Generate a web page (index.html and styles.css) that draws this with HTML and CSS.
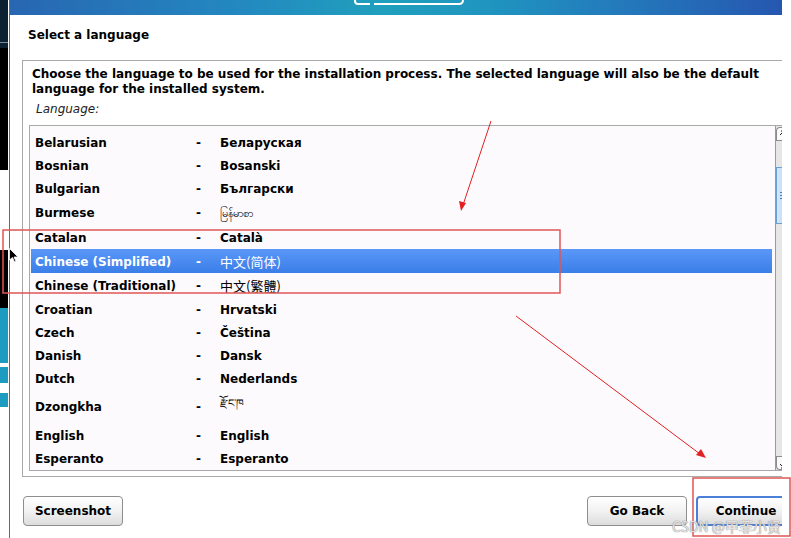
FILE: index.html
```html
<!DOCTYPE html>
<html lang="en">
<head>
    <meta charset="UTF-8">
    <meta name="viewport" content="width=device-width, initial-scale=1.0">
    <title>Select a language</title>
    <link rel="stylesheet" href="styles.css">
</head>
<body>
    <div class="screen">
        <div class="desktop-edge">
            <div class="blk navy"></div>
            <div class="blk black-1"></div>
            <div class="blk white-1"></div>
            <div class="blk black-2"></div>
            <div class="blk teal-1"></div>
            <div class="blk gap-1"></div>
            <div class="blk teal-2"></div>
            <div class="blk gap-2"></div>
            <div class="blk teal-3"></div>
        </div>

        <div class="installer">
            <div class="banner">
                <svg class="banner-logo" width="120" height="15" viewBox="0 0 120 15">
                    <path d="M2 0 V1 Q2 4 5 4 H17" fill="none" stroke="#fff" stroke-width="2"/>
                    <path d="M21 4 H106 Q110 4 110 0" fill="none" stroke="#fff" stroke-width="2"/>
                </svg>
            </div>

            <div class="content">
                <h1 class="title">Select a language</h1>

                <div class="panel">
                    <p class="intro">Choose the language to be used for the installation process. The selected language will also be the default language for the installed system.</p>
                    <div class="field-label">Language:</div>

                    <div class="listbox">
                        <ul class="lang-list">
                            <li class="row"><span>Belarusian</span><span>-</span><span>Беларуская</span></li>
                            <li class="row"><span>Bosnian</span><span>-</span><span>Bosanski</span></li>
                            <li class="row"><span>Bulgarian</span><span>-</span><span>Български</span></li>
                            <li class="row row-25"><span>Burmese</span><span>-</span><span class="script">မြန်မာစာ</span></li>
                            <li class="row row-24"><span>Catalan</span><span>-</span><span>Català</span></li>
                            <li class="row row-24 selected"><span>Chinese (Simplified)</span><span>-</span><span class="cjk">中文(简体)</span></li>
                            <li class="row row-25"><span>Chinese (Traditional)</span><span>-</span><span class="cjk">中文(繁體)</span></li>
                            <li class="row"><span>Croatian</span><span>-</span><span>Hrvatski</span></li>
                            <li class="row"><span>Czech</span><span>-</span><span>Čeština</span></li>
                            <li class="row"><span>Danish</span><span>-</span><span>Dansk</span></li>
                            <li class="row"><span>Dutch</span><span>-</span><span>Nederlands</span></li>
                            <li class="row row-33"><span>Dzongkha</span><span>-</span><span class="script">རྫོང་ཁ</span></li>
                            <li class="row row-24"><span>English</span><span>-</span><span>English</span></li>
                            <li class="row"><span>Esperanto</span><span>-</span><span>Esperanto</span></li>
                        </ul>

                        <div class="scrollbar">
                            <div class="sb-btn sb-up">
                                <svg width="6" height="6" viewBox="0 0 6 6"><path d="M1 5 L5 1 M2 1 H5 V4" fill="none" stroke="#222" stroke-width="1"/></svg>
                            </div>
                            <div class="sb-thumb"><span></span><span></span><span></span></div>
                            <div class="sb-fill"></div>
                            <div class="sb-btn sb-down">
                                <svg width="6" height="6" viewBox="0 0 6 6"><path d="M1 1 L5 5 M5 2 V5 H2" fill="none" stroke="#222" stroke-width="1"/></svg>
                            </div>
                        </div>
                    </div>
                </div>

                <div class="actions">
                    <button class="btn">Screenshot</button>
                    <div class="spacer"></div>
                    <button class="btn">Go Back</button>
                    <button class="btn btn-default">Continue</button>
                </div>
            </div>
        </div>

        <!-- annotations drawn over the screenshot -->
        <svg class="annotations" width="791" height="538" viewBox="0 0 791 538">
            <rect x="3" y="230" width="557" height="63" fill="none" stroke="#e05555" stroke-width="1.5"/>
            <rect x="693" y="478" width="97" height="58" fill="none" stroke="#e05555" stroke-width="1.5"/>
            <line x1="491" y1="121" x2="463" y2="205" stroke="#e42020" stroke-width="1"/>
            <path d="M461 211 L459 201 L466 203 Z" fill="#e42020"/>
            <line x1="516" y1="316" x2="700" y2="454" stroke="#e42020" stroke-width="1"/>
            <path d="M706 458 L696 455 L701 449 Z" fill="#e42020"/>
        </svg>

        <svg class="cursor" width="10" height="16" viewBox="0 0 10 16">
            <path d="M0.5 0.5 V12 L3.5 9.5 L5.5 14 L7 13.3 L5 9 H9 Z" fill="#000" stroke="#fff" stroke-width="0.8"/>
        </svg>

        <div class="watermark">CSDN @甲菲小贤</div>
    </div>
</body>
</html>
```

FILE: styles.css
```css
* {
    box-sizing: border-box;
}
body {
    margin: 0;
    background: #fff;
    font-family: "DejaVu Sans", "Noto Sans CJK SC", sans-serif;
    font-size: 12px;
    color: #000;
}
.screen {
    position: relative;
    width: 791px;
    height: 538px;
    overflow: hidden;
    display: flex;
    background: #fff;
}
.desktop-edge {
    width: 10px;
    flex-shrink: 0;
    border-right: 1px solid #6a6a6a;
    display: flex;
    flex-direction: column;
}
.blk {
    width: 8px;
}
.navy {
    height: 48px;
    background: #0c2233;
    border-top: 33px solid #0c2233;
    box-shadow: inset 0 -5px 0 #0c2233, inset 0 -6px 0 #7a8a96;
}
.black-1 { height: 122px; background: #000; }
.white-1 { height: 80px; background: #fff; }
.black-2 { height: 58px; background: #000; }
.teal-1 { height: 55px; background: #1e9cc0; }
.gap-1 { height: 4px; background: #fff; }
.teal-2 { height: 16px; background: #1e9cc0; }
.gap-2 { height: 10px; background: #fff; }
.teal-3 { height: 14px; background: #1e9cc0; }

.installer {
    width: 772px;
    flex-shrink: 0;
    overflow: hidden;
    display: flex;
    flex-direction: column;
}
.banner {
    height: 15px;
    flex-shrink: 0;
    background: linear-gradient(to right, #2866b2 0%, #2389c0 30%, #209fbd 48%, #1f95bf 62%, #2478bb 80%, #2657b0 100%);
    overflow: hidden;
}
.banner-logo {
    display: block;
    margin-left: 343px;
}
.content {
    padding: 12px 0 0 12px;
}
.title {
    margin: 0 0 17px 6px;
    font-size: 12px;
    line-height: 16px;
    font-weight: bold;
}
.panel {
    width: 772px;
    border: 1px solid #a9a9a9;
    padding: 6px 0 5px 6px;
}
.intro {
    margin: 0 0 5px 3px;
    width: 740px;
    font-weight: bold;
    line-height: 15px;
}
.field-label {
    margin: 0 0 8px 7px;
    font-style: italic;
    line-height: 15px;
    color: #222;
}
.listbox {
    height: 346px;
    border: 1px solid #a9a9a9;
    background: #fdfafd;
    display: flex;
    gap: 3px;
}
.lang-list {
    list-style: none;
    margin: 0;
    padding: 5px 0 0 1px;
    width: 742px;
}
.row {
    display: grid;
    grid-template-columns: 161px 24px 1fr;
    align-items: center;
    height: 23px;
    padding-left: 4px;
    font-weight: bold;
}
.row-24 { height: 24px; padding-top: 1px; }
.row-25 { height: 25px; }
.row-33 { height: 33px; }
.row .cjk,
.row .script {
    font-family: "Noto Sans CJK SC", "Noto Sans", "DejaVu Sans", sans-serif;
    font-weight: normal;
    font-size: 13px;
}
.row .script {
    font-size: 11px;
}
.selected {
    background: linear-gradient(to bottom, #5b97f8, #3a7ee8);
    color: #fff;
}
.scrollbar {
    width: 10px;
    display: flex;
    flex-direction: column;
    background: #e6e6e6;
    border-left: 1px solid #9a9a9a;
    padding-top: 1px;
}
.sb-btn {
    height: 14px;
    background: #fafafa;
    border: 1px solid #8c8c8c;
    border-right: none;
    padding: 2px 0 0 2px;
}
.sb-btn svg {
    display: block;
}
.sb-up {
    border-top-left-radius: 4px;
}
.sb-down {
    border-bottom-left-radius: 4px;
    padding-top: 6px;
}
.sb-thumb {
    margin-top: 26px;
    height: 57px;
    background: linear-gradient(to right, #d5e8fb, #bcd8f5);
    border: 1px solid #6a9fd6;
    border-right: none;
    display: flex;
    flex-direction: column;
    justify-content: center;
    gap: 2px;
    padding-left: 3px;
}
.sb-thumb span {
    display: block;
    width: 6px;
    height: 1px;
    background: #4a7fb8;
}
.sb-fill {
    flex: 1;
}
.actions {
    display: flex;
    gap: 9px;
    margin-top: 19px;
    padding-left: 1px;
}
.spacer {
    flex: 1;
}
.btn {
    width: 100px;
    height: 30px;
    flex-shrink: 0;
    border: 1px solid #8e8e8e;
    border-radius: 4px;
    background: linear-gradient(to bottom, #ffffff 0%, #f2f2f2 50%, #dcdcdc 100%);
    font-family: "DejaVu Sans", sans-serif;
    font-size: 12px;
    font-weight: bold;
    color: #000;
    padding: 0;
}
.btn-default {
    border: 2px solid #4c80d8;
    margin-right: -14px;
}
.annotations {
    position: absolute;
    left: 0;
    top: 0;
    pointer-events: none;
}
.cursor {
    position: absolute;
    left: 9px;
    top: 248px;
}
.watermark {
    position: absolute;
    left: 672px;
    top: 516px;
    font-family: "Noto Sans CJK SC", sans-serif;
    font-size: 14px;
    color: rgba(255, 255, 255, 0.75);
    text-shadow: 0 0 1px #8a8a8a, 0 0 1px #8a8a8a;
    white-space: nowrap;
}
```
